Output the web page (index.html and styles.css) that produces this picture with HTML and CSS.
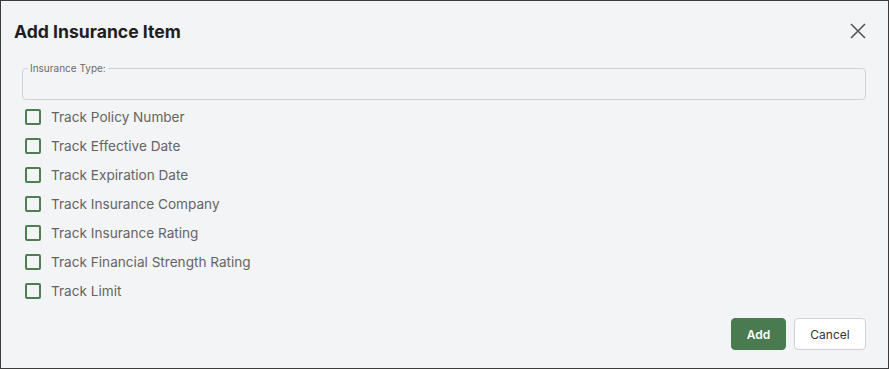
FILE: index.html
```html
<!DOCTYPE html>
<html>
<head>
<meta charset="utf-8">
<link rel="stylesheet" href="styles.css">
</head>
<body>
<div class="dialog">
  <div class="header">
    <h1 class="title">Add Insurance Item</h1>
    <button class="close" aria-label="Close">
      <svg width="16" height="16" viewBox="0 0 16 16"><path d="M1 1L15 15M15 1L1 15" stroke="#555" stroke-width="1.6" fill="none"/></svg>
    </button>
  </div>
  <fieldset class="field">
    <legend>Insurance Type:</legend>
  </fieldset>
  <ul class="checks">
    <li><span class="box"></span>Track Policy Number</li>
    <li><span class="box"></span>Track Effective Date</li>
    <li><span class="box"></span>Track Expiration Date</li>
    <li><span class="box"></span>Track Insurance Company</li>
    <li><span class="box"></span>Track Insurance Rating</li>
    <li><span class="box"></span>Track Financial Strength Rating</li>
    <li><span class="box"></span>Track Limit</li>
  </ul>
  <div class="actions">
    <button class="btn primary">Add</button>
    <button class="btn secondary">Cancel</button>
  </div>
</div>
</body>
</html>
```
FILE: styles.css
```css
html, body { margin: 0; padding: 0; }
body { font-family: Inter, "Noto Sans", sans-serif; background: #f3f4f6; }
.dialog {
  box-sizing: border-box;
  width: 889px;
  height: 369px;
  border: 1px solid #3c3c3c;
  background: #f3f4f6;
  padding: 0 22px 0 13px;
  display: flex;
  flex-direction: column;
}
.header {
  display: flex;
  justify-content: space-between;
  align-items: center;
  height: 60px;
}
.title {
  margin: 0;
  font-size: 17.6px;
  font-weight: 700;
  color: #1f1f1f;
}
.close {
  border: 0;
  background: none;
  padding: 0;
  width: 16px;
  height: 16px;
  margin-right: 0;
  display: flex;
}
.field {
  margin: 1px 0 0 8px;
  height: 38px;
  box-sizing: border-box;
  border: 1px solid #cfd1d4;
  border-radius: 4px;
  padding: 0 5px;
}
.field legend {
  font-size: 10px;
  line-height: 13px;
  color: #6b6b6b;
  padding: 0 2px;
}
.checks {
  list-style: none;
  margin: 2px 0 0 11px;
  padding: 0;
}
.checks li {
  display: flex;
  align-items: center;
  height: 29px;
  font-size: 13.6px;
  color: #646464;
}
.box {
  box-sizing: border-box;
  width: 16px;
  height: 16px;
  border: 2px solid #4f7d52;
  border-radius: 2px;
  margin-right: 10px;
}
.actions {
  display: flex;
  justify-content: flex-end;
  gap: 8px;
  margin-top: 13px;
}
.btn {
  font-family: Inter, "Noto Sans", sans-serif;
  font-size: 12px;
  height: 32px;
  border-radius: 4px;
  cursor: pointer;
}
.primary {
  background: #4a7a50;
  color: #fff;
  border: 1px solid #4a7a50;
  width: 55px;
  font-weight: 600;
}
.secondary {
  background: #fff;
  color: #333;
  border: 1px solid #cfd1d4;
  width: 72px;
}
```
